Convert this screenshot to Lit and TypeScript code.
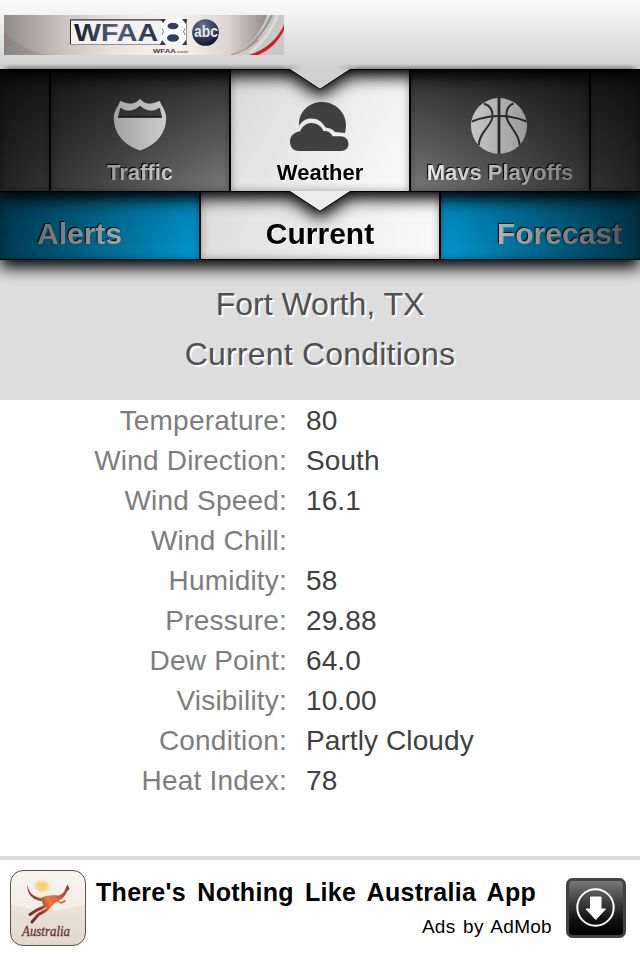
import { LitElement, html, css, svg } from "lit";
import { customElement, property } from "lit/decorators.js";

const trafficIcon = svg`
  <svg width="56" height="56" viewBox="0 0 56 56">
    <path fill="#fff" stroke="#222" stroke-opacity=".5" stroke-width="1" fill-rule="evenodd"
      d="M28 1.500 C25 5 21 7 16 6 C12.500 5.500 10 4 8 3.500 C6.500 9 1.500 13 1.500 21 C1.500 36 11 48 28 54 C45 48 54.500 36 54.500 21 C54.500 13 49.500 9 48 3.500 C46 4 43.500 5.500 40 6 C35 7 31 5 28 1.500 Z
         M6.500 19.500 L8.500 11 C15 16 23 14 28 9 C33 14 41 16 47.500 11 L49.500 19.500 Z"/>
    <path d="M6 20H50" stroke="#111" stroke-width="1.500"/>
  </svg>`;

const weatherIcon = svg`
  <svg width="60" height="52" viewBox="0 0 60 52">
    <path fill="#404040" d="M10 25 C9 11 20 1 33 1 C47 1 57 12 57 24 C57 27 56.500 29.500 56 32 L46 31 C43.500 28 40 27 36.500 26.500 C33 20 27.500 17 21 17.500 C16 18 12 21 10 25 Z"/>
    <path fill="#404040" d="M10 50 C4 50 1 46 1 40.500 C1 35 5 31 11 30.200 C14 24.500 18 22 22.500 22 C28 22 32.500 25 34.500 30.200 C38.500 29.500 42 32 43.500 35.200 H51 C56.500 35.200 59.500 38.500 59.500 43 C59.500 47 56.500 50 52 50 Z"/>
  </svg>`;

const ballIcon = svg`
  <svg width="56" height="56" viewBox="0 0 56 56">
    <circle cx="28" cy="28" r="28" fill="#f4f4f4"/>
    <g fill="none" stroke="#3a3a3a" stroke-width="2">
      <path d="M28 0V56" stroke-width="2.800"/>
      <path d="M1 23.500C18 16 39 16 55.500 23.500"/>
      <path d="M13 5.500C20 8 22 13 21.500 19C20.500 28 7 36 8 47"/>
      <path d="M42.500 5.500C36 8 35 13 35.500 19C37 28 49 36 48.500 47"/>
    </g>
  </svg>`;

const notch = svg`
  <svg class="notch" width="62" height="21" viewBox="0 0 62 21">
    <path class="fill" d="M1 0 H61 V.5 L31 20.300 L1 .5 Z"/>
    <path d="M1 .5 L31 20.300 L61 .5" fill="none" stroke="#000" stroke-width="1"/>
  </svg>`;

const textFace = css`
  :host {
    font-family: "Liberation Sans", Arial, Helvetica, sans-serif;
  }
  .notch {
    position: absolute;
    left: 289px;
    bottom: -21px;
    z-index: 3;
  }
`;

@customElement("station-header")
class StationHeader extends LitElement {
  static styles = [
    textFace,
    css`
      :host {
        display: block;
        position: relative;
        z-index: 3;
        box-sizing: border-box;
        height: 70px;
        padding: 15px 4px 0;
        border-bottom: 1px solid #000;
        background: linear-gradient(#fbfbfb, #d0d0d0);
        filter: drop-shadow(0 7px 8px #000);
      }
      .logo {
        display: block;
      }
      .fill {
        fill: #d0d0d0;
      }
      .edge {
        position: absolute;
        left: 0;
        right: 0;
        bottom: 0;
        height: 5px;
        background: linear-gradient(transparent, rgba(0, 0, 0, 0.35));
        mask-image: linear-gradient(90deg, transparent, #000 10px 280px, transparent 302px 338px, #000 360px 630px, transparent);
      }
    `,
  ];
  render() {
    return html`
      <svg class="logo" width="280" height="40" viewBox="0 0 280 40">
        <defs>
          <linearGradient id="bg">
            <stop offset="0" stop-color="#918a89" />
            <stop offset=".2" stop-color="#c8c0bc" />
            <stop offset=".38" stop-color="#e9e1dd" />
            <stop offset=".62" stop-color="#f8f2ef" />
            <stop offset=".8" stop-color="#dcd4d1" />
            <stop offset=".94" stop-color="#918b8a" />
            <stop offset="1" stop-color="#8c8888" />
          </linearGradient>
          <linearGradient id="ink" x2="1" y2="0">
            <stop offset="0" stop-color="#151a28" />
            <stop offset=".5" stop-color="#566079" />
            <stop offset="1" stop-color="#242e46" />
          </linearGradient>
          <radialGradient id="orb" cx=".4" cy=".25" r=".8">
            <stop offset="0" stop-color="#687393" />
            <stop offset=".55" stop-color="#343e5c" />
            <stop offset="1" stop-color="#0c1020" />
          </radialGradient>
          <clipPath id="frame"><rect width="280" height="40" /></clipPath>
        </defs>
        <g clip-path="url(#frame)">
          <rect width="280" height="40" fill="url(#bg)" />
          <path d="M0 16C10 29 25 37 46 40H0Z" fill="#736d6e" opacity=".25" />
          <path d="M48 40C58 37 70 27 80 2" fill="none" stroke="#c9a5a2" stroke-dasharray="5 4" opacity=".7" />
          <path d="M263 0C256 20 245 32 228 40H280V0Z" fill="#c9c9c7" />
          <path d="M268 0C260 17 252 26 242 34" fill="none" stroke="#929292" stroke-width="2" />
          <path d="M274 0C266 19 256 30 246 38" fill="none" stroke="#dededc" stroke-width="2.500" />
          <path d="M227 40C240 36 248 31 254 25" fill="none" stroke="#c98f90" stroke-width="1.500" />
          <path d="M245 40C262 35 274 23 280 10V15C274 27 266 35 254 40Z" fill="#d41c25" />
          <rect x="66.500" y="4.500" width="116" height="25" fill="#f4f1f0" stroke="#8b9298" />
          <path d="M66 5H183M66.500 5V29" stroke="#262c38" />
          <text x="70" y="25.700" font-size="24" font-weight="700" textLength="84" lengthAdjust="spacingAndGlyphs" fill="url(#ink)">WFAA</text>
          <path d="M157 4H182V30H157Z" fill="#fff" />
          <path d="M156 4h6l-3 4zM183 4h-5l4 5zM156 30h6l-4-5zM183 30h-5l4-5z" fill="#333b49" />
          <text x="161" y="25.500" font-size="24" font-weight="700" textLength="17" lengthAdjust="spacingAndGlyphs" fill="#fff" stroke="#fff" stroke-width="3">8</text>
          <ellipse cx="169" cy="11" rx="5.500" ry="3.200" fill="#333e58" />
          <ellipse cx="169" cy="23" rx="6" ry="3.800" fill="#333e58" />
          <path d="M158 13.500q3 3 0 6.500M181 13.500q-3 3 0 6.500" fill="none" stroke="#737b8a" />
          <circle cx="201.500" cy="17.500" r="13.300" fill="url(#orb)" />
          <text x="190" y="22" font-size="16" font-weight="700" textLength="24" lengthAdjust="spacingAndGlyphs" fill="#e9eaf0">abc</text>
          <text x="149" y="37.500" font-size="6" font-weight="700" textLength="35" lengthAdjust="spacingAndGlyphs" fill="#463c38">WFAA<tspan font-size="4" fill="#746b67">.com</tspan></text>
        </g>
      </svg>
      <div class="edge"></div>
      ${notch}
    `;
  }
}

@customElement("section-tabs")
class SectionTabs extends LitElement {
  static styles = [
    textFace,
    css`
      :host {
        display: grid;
        grid-template-columns: 49px 180px 180px 180px 51px;
        position: relative;
        z-index: 2;
        box-sizing: border-box;
        height: 122px;
        border-bottom: 1px solid #000;
        filter: drop-shadow(0 7px 8px #000);
      }
      .tab {
        box-sizing: border-box;
        border-left: 2px solid #000;
        display: flex;
        flex-direction: column;
        align-items: center;
        justify-content: flex-end;
        padding-bottom: 5px;
        font-size: 22px;
        line-height: 26px;
        font-weight: 700;
        white-space: nowrap;
        color: #f8f8f8;
        text-shadow: -1px -1px 1px #000;
        background: linear-gradient(#303030, #7a7a7a);
        box-shadow: inset 0 0 8px rgba(0, 0, 0, 0.35);
      }
      .tab:first-child {
        border-left: 0;
      }
      .active {
        color: #000;
        text-shadow: 1px 1px 1px #fff;
        background: linear-gradient(120deg, #d9d9d9, #fbfbfb);
      }
      .icon {
        display: flex;
        margin-bottom: 7px;
      }
      .active .icon {
        margin-right: 3px;
      }
      .ball {
        margin-right: 3px;
        margin-bottom: 6px;
      }
      .shade {
        position: absolute;
        inset: 0;
        background: linear-gradient(90deg, rgba(0, 0, 0, 0.72), rgba(0, 0, 0, 0) 229px 411px, rgba(0, 0, 0, 0.72));
      }
      .fill {
        fill: #ececec;
      }
    `,
  ];
  render() {
    return html`
      <div class="tab"></div>
      <div class="tab"><span class="icon">${trafficIcon}</span>Traffic</div>
      <div class="tab active"><span class="icon">${weatherIcon}</span>Weather</div>
      <div class="tab"><span class="icon ball">${ballIcon}</span>Mavs Playoffs</div>
      <div class="tab"></div>
      <div class="shade"></div>
      ${notch}
    `;
  }
}

@customElement("view-tabs")
class ViewTabs extends LitElement {
  static styles = [
    textFace,
    css`
      :host {
        display: grid;
        grid-template-columns: 199px 242px 199px;
        position: relative;
        z-index: 1;
        box-sizing: border-box;
        height: 68px;
        border-bottom: 1px solid #000;
        filter: drop-shadow(0 8px 8px #000);
      }
      .tab {
        box-sizing: border-box;
        display: flex;
        align-items: center;
        font-size: 30px;
        line-height: 34px;
        font-weight: 700;
        padding-top: 17px;
        padding-bottom: 1px;
        color: #dcdcdc;
        text-shadow: -1px -1px 1px #000;
        background: linear-gradient(#0083b6, #009ad2);
        box-shadow: inset 0 0 8px rgba(0, 0, 0, 0.35);
      }
      .left {
        padding-left: 37px;
      }
      .right {
        justify-content: flex-end;
        padding-right: 18px;
      }
      .active {
        justify-content: center;
        border: solid #000;
        border-width: 0 2px;
        color: #000;
        text-shadow: 1px 1px 1px #fff;
        background: linear-gradient(110deg, #dcdcdc, #fbfbfb);
      }
      .shade {
        position: absolute;
        inset: 0;
        background: linear-gradient(90deg, rgba(0, 0, 0, 0.62), rgba(0, 0, 0, 0) 199px 441px, rgba(0, 0, 0, 0.66));
      }
    `,
  ];
  render() {
    return html`
      <div class="tab left">Alerts</div>
      <div class="tab active">Current</div>
      <div class="tab right">Forecast</div>
      <div class="shade"></div>
    `;
  }
}

@customElement("ad-banner")
class AdBanner extends LitElement {
  static styles = [
    textFace,
    css`
      :host {
        display: flex;
        box-sizing: border-box;
        height: 104px;
        padding: 10px 14px 0 10px;
        border-top: 4px solid #ddd;
        background: #fff;
        color: #000;
      }
      .copy {
        flex: 1;
        padding: 6px 0 0 10px;
        white-space: nowrap;
      }
      .title {
        font-size: 25px;
        line-height: 32px;
        font-weight: 700;
        word-spacing: 4px;
        letter-spacing: 0.3px;
      }
      .by {
        font-size: 19px;
        line-height: 24px;
        margin-top: 7px;
        padding-right: 14px;
        text-align: right;
        word-spacing: 2px;
        letter-spacing: 0.3px;
      }
      .get {
        margin-top: 8px;
      }
    `,
  ];
  render() {
    return html`
      <svg width="76" height="76" viewBox="0 0 76 76">
        <defs>
          <linearGradient id="sand" x2="0" y2="1">
            <stop offset="0" stop-color="#f3ece3" />
            <stop offset="1" stop-color="#e2d8ca" />
          </linearGradient>
          <linearGradient id="roo" gradientUnits="userSpaceOnUse" x1="17" x2="60" y1="40" y2="20">
            <stop offset="0" stop-color="#6b3036" />
            <stop offset=".3" stop-color="#a83c30" />
            <stop offset=".5" stop-color="#ee7a38" />
            <stop offset=".72" stop-color="#dd5a30" />
            <stop offset="1" stop-color="#7d3a3c" />
          </linearGradient>
          <radialGradient id="sun">
            <stop offset="0" stop-color="#f8c95c" />
            <stop offset=".6" stop-color="#f9d98a" />
            <stop offset="1" stop-color="#f9e5b8" stop-opacity="0" />
          </radialGradient>
        </defs>
        <rect x=".6" y=".6" width="74.800" height="74.800" rx="12" fill="url(#sand)" />
        <path d="M1 13A12 12 0 0 1 13 1H63A12 12 0 0 1 75 13V34C52 42 24 42 1 34Z" fill="#fff" opacity=".4" />
        <ellipse cx="32" cy="16" rx="9.500" ry="7.500" fill="url(#sun)" />
        <path d="M17.500 14C18 22 23 27 31 28C36 25 43 25 49 25.500C53 24 55 21 56 17.500L57.500 14.500L59.500 19L56.500 22C55 27 51 30 46 32L42 36C38 39 33 37 32 31C24 31 16 24 17.500 14Z" fill="url(#roo)" />
        <g fill="none" stroke="url(#roo)" stroke-linecap="round" stroke-linejoin="round">
          <path d="M38 34C33 38 30 39 27 40L20 44.500" stroke-width="3" />
          <path d="M40 36C36 42 32 42 28 45L22 52" stroke-width="3" />
          <path d="M47 30L51 33L55 31" stroke-width="1.500" />
        </g>
        <text x="12" y="66" font-family="Liberation Serif, serif" font-style="italic" font-size="15" textLength="48" lengthAdjust="spacingAndGlyphs" fill="#673238" stroke="#673238" stroke-width=".3">Australia</text>
        <rect x=".5" y=".5" width="75" height="75" rx="12.500" fill="none" stroke="#555" />
      </svg>
      <div class="copy">
        <div class="title">There's Nothing Like Australia App</div>
        <div class="by">Ads by AdMob</div>
      </div>
      <svg class="get" width="60" height="60" viewBox="0 0 60 60">
        <defs>
          <linearGradient id="gloss" x2="0" y2="1">
            <stop offset="0" stop-color="#7b7b7b" />
            <stop offset=".7" stop-color="#111" />
            <stop offset="1" stop-color="#000" />
          </linearGradient>
        </defs>
        <rect x="1.500" y="1.500" width="57" height="57" rx="5" fill="url(#gloss)" stroke="#414141" stroke-width="3" />
        <circle cx="29.500" cy="29.500" r="18.200" fill="none" stroke="#fff" stroke-width="2" />
        <path d="M24.500 19H35V31H39.500L29.800 41.500L20 31H24.500Z" fill="#fff" stroke="#fff" stroke-linejoin="round" />
      </svg>
    `;
  }
}

@customElement("app-root")
class AppRoot extends LitElement {
  @property({ attribute: false }) readings: [string, string][] = [
    ["Temperature", "80"],
    ["Wind Direction", "South"],
    ["Wind Speed", "16.1"],
    ["Wind Chill", ""],
    ["Humidity", "58"],
    ["Pressure", "29.88"],
    ["Dew Point", "64.0"],
    ["Visibility", "10.00"],
    ["Condition", "Partly Cloudy"],
    ["Heat Index", "78"],
  ];
  static styles = [
    textFace,
    css`
      :host {
        display: flex;
        flex-direction: column;
        width: 640px;
        height: 960px;
        overflow: hidden;
        background: #fff;
      }
      .place {
        height: 121px;
        padding-top: 19px;
        background: #ddd;
        color: #505050;
        text-align: center;
        font-size: 32px;
        line-height: 50px;
        text-shadow: 2px 2px 1px #fff;
      }
      .cond {
        letter-spacing: 0.2px;
      }
      .readings {
        flex: 1;
        display: grid;
        grid-template-columns: 287px 1fr;
        grid-auto-rows: 40px;
        column-gap: 19px;
        margin: 0;
        font-size: 28px;
        line-height: 41px;
      }
      dt {
        color: #7d7d7d;
        text-align: right;
        letter-spacing: 0.2px;
      }
      dd {
        margin: 0;
        color: #404040;
        letter-spacing: 0.1px;
      }
    `,
  ];
  render() {
    return html`
      <station-header></station-header>
      <section-tabs></section-tabs>
      <view-tabs></view-tabs>
      <div class="place">
        <div>Fort Worth, TX</div>
        <div class="cond">Current Conditions</div>
      </div>
      <dl class="readings">
        ${this.readings.map(([k, v]) => html`<dt>${k}:</dt><dd>${v}</dd>`)}
      </dl>
      <ad-banner></ad-banner>
    `;
  }
}
